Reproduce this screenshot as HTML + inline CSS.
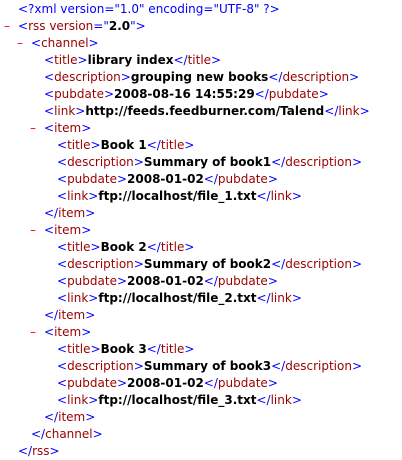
<!DOCTYPE html>
<html><head><style>
body{margin:0;background:#fff;font-family:"DejaVu Sans",Verdana,sans-serif;font-size:12px;}
.l{position:absolute;height:17px;line-height:17px;white-space:pre;}
.b{color:#0000ff}.t{color:#990000}.x{font-weight:bold;color:#000}
.m{position:absolute;color:#ff0000;}
</style></head><body>
<div id="c"></div>
<script>
const lines=[
[0,'<span class="b">&lt;?xml version="1.0" encoding="UTF-8" ?&gt;</span>'],
[0,'<span class="b">&lt;</span><span class="t">rss version</span><span class="b">="</span><span class="x">2.0</span><span class="b">"&gt;</span>',1],
[1,'<span class="b">&lt;</span><span class="t">channel</span><span class="b">&gt;</span>',1],
[2,'T:title:library index'],
[2,'T:description:grouping new books'],
[2,'T:pubdate:2008-08-16 14:55:29'],
[2,'T:link:http://feeds.feedburner.com/Talend'],
];
function tg(n,v){return '<span class="b">&lt;</span><span class="t">'+n+'</span><span class="b">&gt;</span><span class="x">'+v+'</span><span class="b">&lt;/</span><span class="t">'+n+'</span><span class="b">&gt;</span>';}
function op(n){return '<span class="b">&lt;</span><span class="t">'+n+'</span><span class="b">&gt;</span>';}
function cl(n){return '<span class="b">&lt;/</span><span class="t">'+n+'</span><span class="b">&gt;</span>';}
for(let i=1;i<=3;i++){
lines.push([2,op('item'),1]);
lines.push([3,'T:title:Book '+i]);
lines.push([3,'T:description:Summary of book'+i]);
lines.push([3,'T:pubdate:2008-01-02']);
lines.push([3,'T:link:ftp://localhost/file_'+i+'.txt']);
lines.push([2,cl('item')]);
}
lines.push([1,cl('channel')]);
lines.push([0,cl('rss')]);
let h='';
lines.forEach((ln,i)=>{
let s=ln[1];
if(s.startsWith('T:')){const p=s.split(':');s=tg(p[1],p.slice(2).join(':'));}
const y=1+i*17;
const x=18+ln[0]*13;
if(ln[2])h+='<div class="m l" style="left:'+(x-14)+'px;top:'+y+'px">–</div>';
h+='<div class="l" style="left:'+x+'px;top:'+y+'px">'+s+'</div>';
});
document.getElementById('c').innerHTML=h;
</script>
</body></html>
